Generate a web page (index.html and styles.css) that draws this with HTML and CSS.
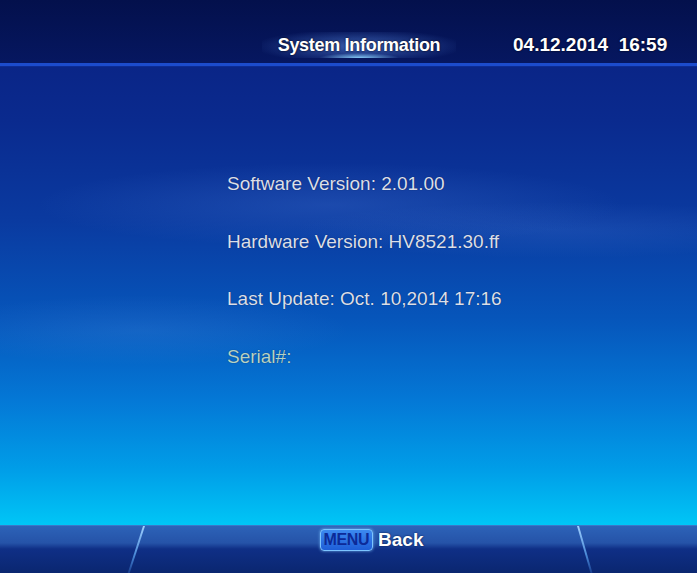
FILE: index.html
```html
<!DOCTYPE html>
<html>
<head>
<meta charset="utf-8">
<link rel="stylesheet" href="styles.css">
</head>
<body>
<div class="screen">
  <header class="topbar">
    <div class="title">System Information</div>
    <div class="clock">04.12.2014&nbsp;&nbsp;16:59</div>
  </header>
  <main class="content">
    <div class="info">
      <div class="row">Software Version: 2.01.00</div>
      <div class="row">Hardware Version: HV8521.30.ff</div>
      <div class="row">Last Update: Oct. 10,2014 17:16</div>
      <div class="row serial">Serial#:</div>
    </div>
  </main>
  <footer class="bottombar">
    <div class="hint"><span class="key">MENU</span><span class="label">Back</span></div>
  </footer>
</div>
</body>
</html>
```
FILE: styles.css
```css
html, body {
  margin: 0;
  padding: 0;
  background: #04124f;
}
.screen {
  width: 697px;
  height: 573px;
  display: flex;
  flex-direction: column;
  overflow: hidden;
  font-family: "Liberation Sans", Arial, sans-serif;
  background:
    radial-gradient(ellipse 420px 60px at 330px 205px, rgba(120,170,255,0.16), rgba(120,170,255,0) 70%),
    radial-gradient(ellipse 380px 40px at 560px 230px, rgba(120,170,255,0.12), rgba(120,170,255,0) 70%),
    radial-gradient(ellipse 300px 50px at 140px 330px, rgba(150,190,255,0.10), rgba(150,190,255,0) 70%),
    linear-gradient(180deg, #0a1f7e 0px, #0a2a8e 120px, #0a3aa0 220px, #0656bb 320px, #0478d6 400px, #009ee8 470px, #00c6f6 525px);
  position: relative;
}
.topbar {
  height: 66px;
  flex: 0 0 66px;
  background: linear-gradient(180deg, #03104c 0%, #061760 100%);
  border-bottom: 3px solid #1c4ccc;
  box-shadow: 0 1px 0 #0d2c94;
  display: flex;
  align-items: flex-end;
  padding-bottom: 5px;
  box-sizing: border-box;
}
.title {
  margin-left: 262px;
  width: 194px;
  text-align: center;
  color: #ffffff;
  font-weight: bold;
  font-size: 18px;
  letter-spacing: -0.3px;
  line-height: 26px;
  background:
    radial-gradient(ellipse 40px 5px at 50% 100%, rgba(140,210,255,0.95), rgba(120,200,255,0) 100%),
    radial-gradient(ellipse 105px 17px at 50% 55%, rgba(90,140,230,0.6), rgba(90,140,230,0) 100%);
  text-shadow: 0 0 2px #000;
}
.clock {
  margin-left: 57px;
  color: #ffffff;
  font-weight: bold;
  font-size: 19px;
  line-height: 26px;
  text-shadow: 0 0 2px #000;
}
.content {
  flex: 1;
  padding-top: 107px;
  padding-left: 227px;
}
.info {
  display: flex;
  flex-direction: column;
  gap: 35.7px;
}
.row {
  font-size: 19px;
  line-height: 22px;
  color: #dadfea;
  text-shadow: 0 0 1px rgba(0,0,30,0.6);
}
.serial {
  color: #b4d2c6;
}
.bottombar {
  height: 48px;
  flex: 0 0 48px;
  background: linear-gradient(180deg, #2d63b8 0px, #2553a8 17px, #0f2f86 23px, #0a266f 48px);
  border-top: 1px solid #3a78c8;
  box-sizing: border-box;
  display: flex;
  justify-content: center;
  position: relative;
}
.bottombar::before,
.bottombar::after {
  content: "";
  position: absolute;
  top: 0;
  width: 2px;
  height: 48px;
  background: linear-gradient(180deg, #9fd0ff, #4a8ad8 60%, rgba(40,90,180,0.4));
}
.bottombar::before {
  left: 143px;
  transform: skewX(-18deg);
  transform-origin: top;
}
.bottombar::after {
  left: 577px;
  transform: skewX(16deg);
  transform-origin: top;
}
.hint {
  display: flex;
  align-items: center;
  gap: 5px;
  margin-top: 2px;
  height: 24px;
  margin-left: 46px;
}
.key {
  display: inline-block;
  padding: 0 3px;
  height: 20px;
  line-height: 20px;
  border: 1.5px solid #7cc4ff;
  border-radius: 4px;
  background: linear-gradient(180deg, #3c8af0 0%, #1e5ed8 100%);
  color: #0c2a98;
  font-weight: bold;
  font-size: 16px;
  letter-spacing: -0.4px;
  box-shadow: 0 0 3px rgba(130,200,255,0.8);
}
.label {
  color: #ffffff;
  font-weight: bold;
  font-size: 19px;
  text-shadow: 0 0 2px #001040;
}
```
